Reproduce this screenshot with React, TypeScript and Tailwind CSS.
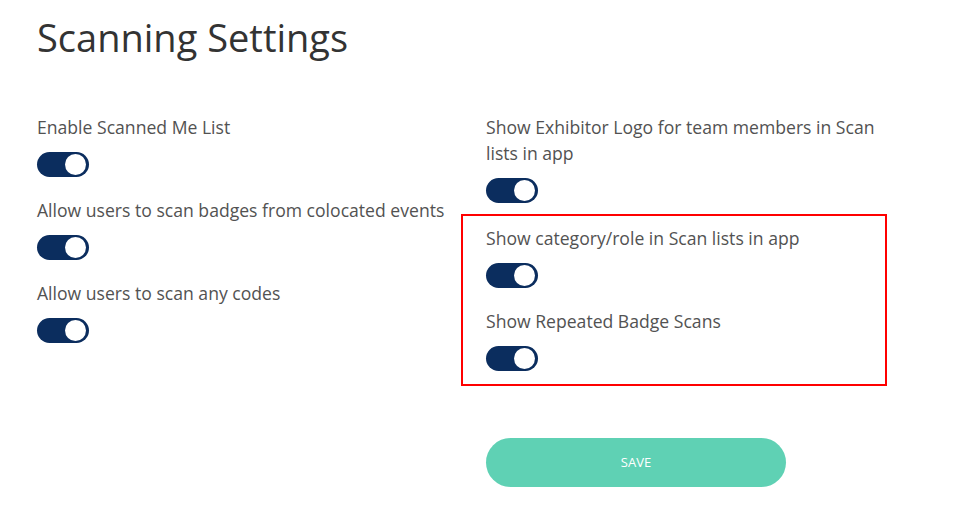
import { useState } from 'react';

interface Setting {
  id: string;
  label: string;
}

const leftSettings: Setting[] = [
  { id: 'scanned-me', label: 'Enable Scanned Me List' },
  { id: 'colocated', label: 'Allow users to scan badges from colocated events' },
  { id: 'any-codes', label: 'Allow users to scan any codes' },
];

function Toggle({ on, onChange }: { on: boolean; onChange: () => void }) {
  return (
    <button
      onClick={onChange}
      className={`relative block w-[52px] h-[25px] rounded-full ${on ? 'bg-[#0b2d5e]' : 'bg-gray-300'}`}
    >
      <span
        className={`absolute top-[2px] w-[21px] h-[21px] rounded-full bg-white ${on ? 'right-[3px]' : 'left-[3px]'}`}
      />
    </button>
  );
}

function SettingItem({ label, on, onChange, className = '' }: { label: string; on: boolean; onChange: () => void; className?: string }) {
  return (
    <div className={className}>
      <div className="text-[17.6px] leading-[26px] text-[#525252]">{label}</div>
      <div className="mt-[12px]">
        <Toggle on={on} onChange={onChange} />
      </div>
    </div>
  );
}

export default function App() {
  const [values, setValues] = useState<Record<string, boolean>>({
    'scanned-me': true,
    colocated: true,
    'any-codes': true,
    'exhibitor-logo': true,
    category: true,
    repeated: true,
  });

  const flip = (id: string) => setValues(v => ({ ...v, [id]: !v[id] }));

  return (
    <div className="min-h-screen bg-white pl-[37px] pt-[11px]" style={{ fontFamily: '"Open Sans", sans-serif' }}>
      <h1 className="text-[38px] leading-[52px] text-[#333]">Scanning Settings</h1>

      <div className="grid grid-cols-[424px_426px] mt-[51px]">
        <div>
          {leftSettings.map(s => (
            <SettingItem key={s.id} label={s.label} on={values[s.id]} onChange={() => flip(s.id)} className="mb-[20px]" />
          ))}
        </div>

        <div>
          <SettingItem
            label="Show Exhibitor Logo for team members in Scan lists in app"
            on={values['exhibitor-logo']}
            onChange={() => flip('exhibitor-logo')}
            className="pl-[25px] pr-[10px] mb-[11px]"
          />
          <div className="border-2 border-[#ff0000] pl-[23px] pt-[9px] pb-[13px]">
            <SettingItem label="Show category/role in Scan lists in app" on={values.category} onChange={() => flip('category')} className="mb-[20px]" />
            <SettingItem label="Show Repeated Badge Scans" on={values.repeated} onChange={() => flip('repeated')} />
          </div>
          <button className="ml-[25px] mt-[52px] w-[300px] h-[49px] rounded-full bg-[#5fd1b4] text-white text-[13px]">
            SAVE
          </button>
        </div>
      </div>
    </div>
  );
}
